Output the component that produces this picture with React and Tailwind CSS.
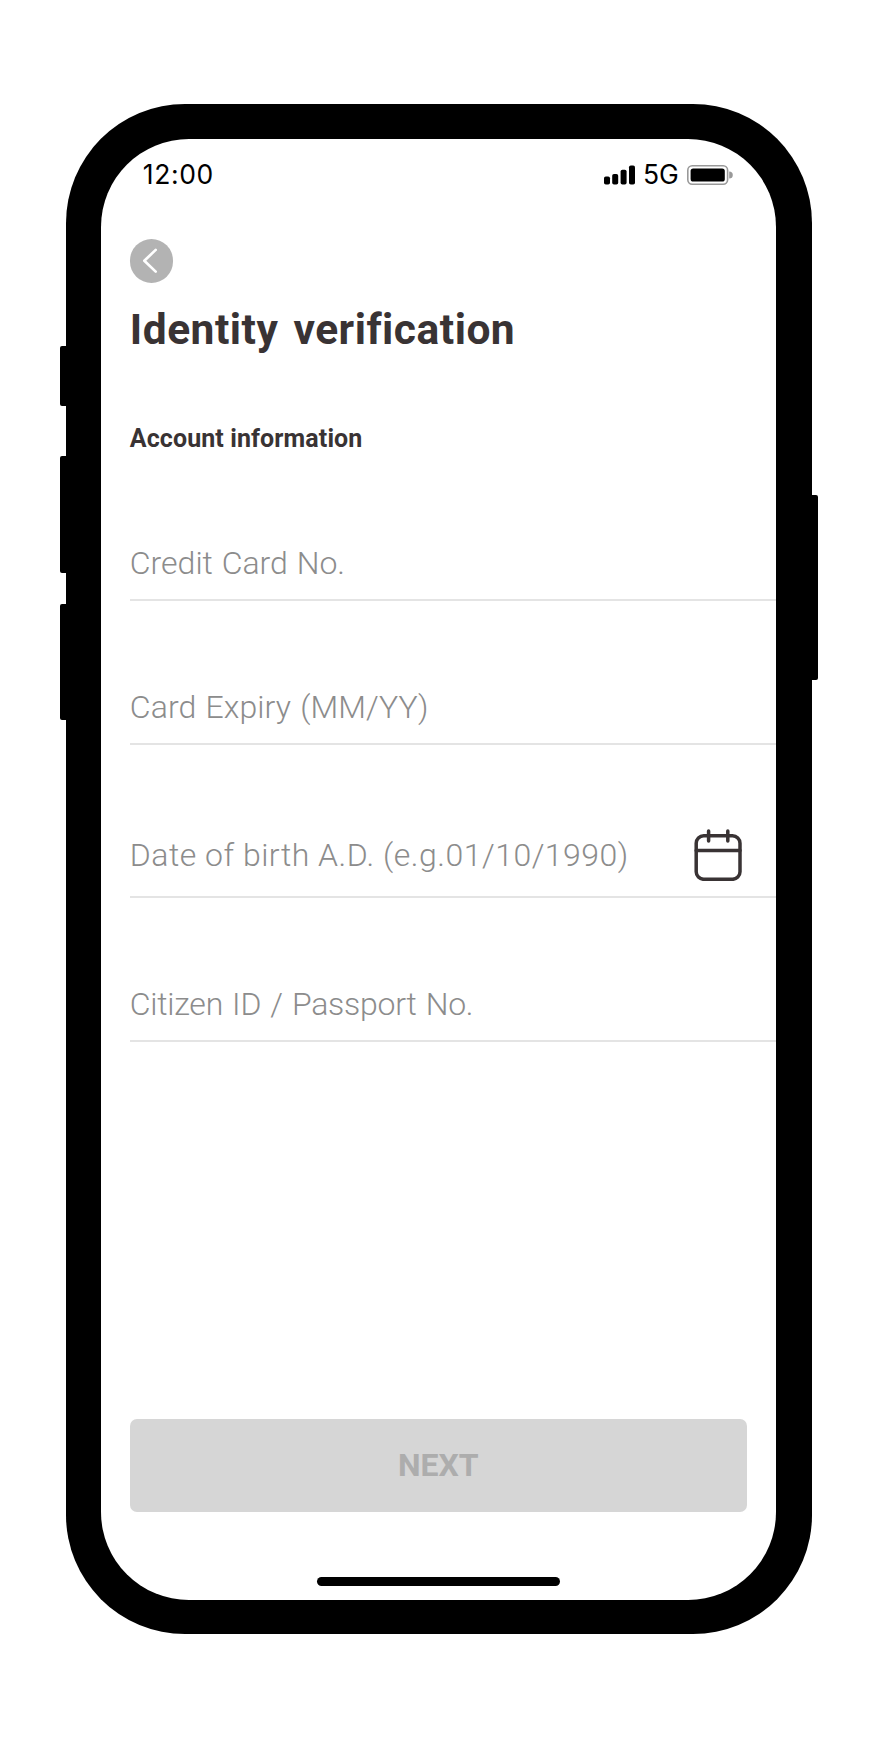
import React from "react";

const fields = [
  { label: "Credit Card No.", row: "h-[60px]", spacing: "tracking-[0px] [word-spacing:1px]" },
  {
    label: "Card Expiry (MM/YY)",
    row: "h-[144px]",
    spacing: "tracking-[0.1px] [word-spacing:1.2px]",
  },
  {
    label: "Date of birth A.D. (e.g.01/10/1990)",
    row: "h-[153px]",
    spacing: "tracking-[0.5px]",
    calendar: true,
  },
  {
    label: "Citizen ID / Passport No.",
    row: "h-[144px]",
    spacing: "tracking-[-0.25px] [word-spacing:1.6px]",
  },
];

const SignalIcon = () => (
  <svg className="h-5 w-[31px]" viewBox="0 0 31 20" fill="currentColor">
    <rect x="0" y="11.5" width="6" height="8" rx="1.8" />
    <rect x="8.2" y="9" width="6" height="10.5" rx="1.8" />
    <rect x="16.6" y="4.8" width="6" height="14.7" rx="1.8" />
    <rect x="25" y="0.5" width="6" height="19" rx="1.8" />
  </svg>
);

const BatteryIcon = () => (
  <svg className="h-5 w-[46px]" viewBox="0 0 46 20" fill="none">
    <rect x="0.8" y="0.8" width="39.8" height="18.4" rx="4.4" stroke="#999" strokeWidth="1.6" />
    <rect x="3.6" y="3.4" width="34.2" height="13.2" rx="2.6" fill="#000" />
    <path d="M42.2 6.4a3.6 3.6 0 0 1 0 7.2z" fill="#999" />
  </svg>
);

const CalendarIcon = () => (
  <svg
    className="h-[52px] w-[48px]"
    viewBox="0 0 48 52"
    fill="none"
    stroke="#393334"
    strokeWidth="3.5"
    strokeLinecap="round"
  >
    <rect x="2.2" y="6.7" width="43.8" height="43.6" rx="7.5" />
    <path d="M2.2 21.6h43.8M14.6 2v10M33.8 2v10" />
  </svg>
);

const Field = ({ label, row, spacing, calendar }) => (
  <div className={`flex items-end border-b-2 border-[#e4e4e4] ${row}`}>
    <span
      className={`whitespace-nowrap text-[32px] font-light leading-[38px] text-[#8c8c8c] ${spacing} ${
        calendar ? "mb-[21.5px]" : "mb-[17px]"
      }`}
    >
      {label}
    </span>
    {calendar && (
      <span className="mb-[15px] ml-auto mr-[34px]">
        <CalendarIcon />
      </span>
    )}
  </div>
);

const App = () => {
  return (
    <div className="flex h-[1740px] w-[880px] bg-white pt-[104.4px] pl-[65.8px] font-['Roboto',sans-serif]">
      <div className="relative h-[1529.8px] w-[745.9px] rounded-[119px] bg-black pt-[34.4px] pl-[35px]">
        {/* Side buttons */}
        <div className="absolute top-[241.6px] -left-[6px] h-[60px] w-3 rounded-[2px] bg-black" />
        <div className="absolute top-[352px] -left-[6px] h-[117px] w-3 rounded-[2px] bg-black" />
        <div className="absolute top-[499.4px] -left-[6px] h-[116px] w-3 rounded-[2px] bg-black" />
        <div className="absolute top-[390.6px] -right-[6.4px] h-[185px] w-3 rounded-[2px] bg-black" />

        {/* Screen */}
        <div className="flex h-[1461.4px] w-[675px] flex-col overflow-hidden rounded-[88px] bg-white pl-[29px]">
          <header className="mt-[20px] flex h-8 items-center pr-[43px] pl-[13px] font-['Inter',sans-serif] text-black">
            <span className="text-[26.5px] tracking-[0.6px]">12:00</span>
            <div className="ml-auto flex items-center">
              <SignalIcon />
              <span className="mr-[8px] ml-[8px] text-[26.5px]">5G</span>
              <BatteryIcon />
            </div>
          </header>

          <button className="mt-[48.4px] flex size-[43.5px] items-center justify-center rounded-full bg-[#b3b3b3]">
            <svg className="size-[43.5px]" viewBox="0 0 44 44" fill="none" stroke="#fff" strokeWidth="2.7">
              <path d="M26 11 14.5 22 26 33" strokeLinecap="round" strokeLinejoin="round" />
            </svg>
          </button>

          <h1 className="mt-[21px] text-[42.5px] font-bold leading-[52px] tracking-[0.5px] [word-spacing:4px] whitespace-nowrap text-[#393334]">
            Identity verification
          </h1>
          <h2 className="mt-[67px] text-[25px] font-bold leading-[32px] tracking-[0.1px] whitespace-nowrap text-[#393334]">
            Account information
          </h2>

          <div className="mt-[86px]">
            {fields.map((field) => (
              <Field key={field.label} {...field} />
            ))}
          </div>

          <button className="mt-auto mr-[29px] h-[93.4px] shrink-0 rounded-[7px] bg-[#d6d6d6] text-[32px] font-bold text-[#adadad]">
            NEXT
          </button>
          <div className="mt-[64.6px] mb-[14.4px] ml-[187px] h-[9.2px] w-[243px] shrink-0 rounded-full bg-black" />
        </div>
      </div>
    </div>
  );
};

export default App;
